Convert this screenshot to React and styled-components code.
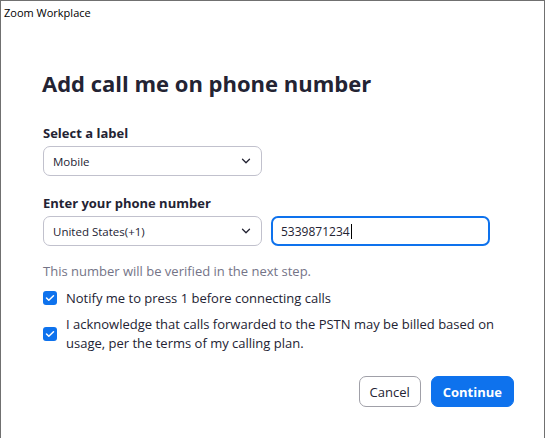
import React from 'react';
import styled, { createGlobalStyle } from 'styled-components';

const GlobalStyle = createGlobalStyle`
	html, body {
		margin: 0;
		padding: 0;
		background: #ffffff;
	}
	body {
		font-family: "Open Sans", "Noto Sans", sans-serif;
		color: #232333;
	}
`;

const Window = styled.div`
	width: 545px;
	height: 438px;
	box-sizing: border-box;
	border-left: 1px solid #707070;
	border-top: 1px solid #707070;
	border-right: 1px solid #707070;
	background: #ffffff;
`;

const TitleBar = styled.div`
	height: 22px;
	padding-left: 3px;
	font-size: 11px;
	line-height: 23px;
	color: #000000;
`;

const Content = styled.div`
	padding: 45px 0 0 42px;
	width: 471px;
`;

const Heading = styled.h1`
	margin: 0 0 26px -1px;
	font-size: 22px;
	font-weight: 700;
	line-height: 30px;
	color: #232333;
`;

const Field = styled.div`
	display: flex;
	flex-direction: column;
	margin-bottom: ${(p) => p.gap || 0}px;
`;

const Label = styled.label`
	font-size: 13px;
	font-weight: 700;
	line-height: 18px;
	margin-bottom: 4px;
`;

const Row = styled.div`
	display: flex;
	gap: 9px;
`;

const SelectBox = styled.div`
	width: 219px;
	height: 30px;
	box-sizing: border-box;
	border: 1px solid #c1c1cd;
	border-radius: 7px;
	display: flex;
	align-items: center;
	justify-content: space-between;
	padding: 0 10px 0 9px;
	font-size: 11.5px;
	color: #232333;
`;

const PhoneInput = styled.div`
	width: 219px;
	height: 30px;
	box-sizing: border-box;
	border: 2px solid #0e72ed;
	border-radius: 7px;
	display: flex;
	align-items: center;
	padding-left: 8px;
	font-size: 12px;
	color: #232333;
`;

const Caret = styled.span`
	display: inline-block;
	width: 1px;
	height: 15px;
	background: #000000;
	margin-left: 1px;
`;

const Hint = styled.p`
	margin: 16px 0 9px;
	font-size: 13px;
	line-height: 18px;
	color: #747487;
`;

const CheckRow = styled.div`
	display: flex;
	align-items: ${(p) => (p.multi ? 'center' : 'flex-start')};
	gap: 9px;
	margin-bottom: ${(p) => p.gap || 0}px;
	font-size: 13px;
	line-height: 19px;
	color: #232333;
`;

const Box = styled.span`
	flex: none;
	width: 14px;
	height: 14px;
	border-radius: 3px;
	background: #0e72ed;
	display: flex;
	align-items: center;
	justify-content: center;
	margin-top: ${(p) => (p.multi ? 0 : 2)}px;
`;

const Footer = styled.div`
	display: flex;
	justify-content: flex-end;
	gap: 10px;
	margin-top: 23px;
`;

const Button = styled.button`
	height: 31px;
	box-sizing: border-box;
	border-radius: 7px;
	font-family: inherit;
	font-size: 13px;
	padding: 0 ${(p) => (p.primary ? 11 : 10)}px;
	border: 1px solid ${(p) => (p.primary ? '#0e72ed' : '#a0a0a8')};
	background: ${(p) => (p.primary ? '#0e72ed' : '#ffffff')};
	color: ${(p) => (p.primary ? '#ffffff' : '#232333')};
	font-weight: ${(p) => (p.primary ? 700 : 400)};
`;

const Chevron = () => (
	<svg width="10" height="6" viewBox="0 0 10 6" fill="none">
		<path d="M1.5 1.2l3.5 3.5 3.5-3.5" stroke="#232333" strokeWidth="1.3" strokeLinecap="round" strokeLinejoin="round" />
	</svg>
);

const Check = () => (
	<svg width="10" height="8" viewBox="0 0 10 8" fill="none">
		<path d="M1.5 4l2.3 2.3L8.5 1.7" stroke="#ffffff" strokeWidth="1.5" strokeLinecap="round" strokeLinejoin="round" />
	</svg>
);

export default function App() {
	return (
		<>
			<GlobalStyle />
			<Window>
				<TitleBar>Zoom Workplace</TitleBar>
				<Content>
					<Heading>Add call me on phone number</Heading>
					<Field gap={18}>
						<Label>Select a label</Label>
						<SelectBox>
							<span>Mobile</span>
							<Chevron />
						</SelectBox>
					</Field>
					<Field>
						<Label>Enter your phone number</Label>
						<Row>
							<SelectBox>
								<span>United States(+1)</span>
								<Chevron />
							</SelectBox>
							<PhoneInput>
								5339871234
								<Caret />
							</PhoneInput>
						</Row>
					</Field>
					<Hint>This number will be verified in the next step.</Hint>
					<CheckRow gap={7}>
						<Box>
							<Check />
						</Box>
						<span>Notify me to press 1 before connecting calls</span>
					</CheckRow>
					<CheckRow multi>
						<Box multi>
							<Check />
						</Box>
						<span>
							I acknowledge that calls forwarded to the PSTN may be billed based on usage, per the terms of my calling plan.
						</span>
					</CheckRow>
					<Footer>
						<Button>Cancel</Button>
						<Button primary>Continue</Button>
					</Footer>
				</Content>
			</Window>
		</>
	);
}
